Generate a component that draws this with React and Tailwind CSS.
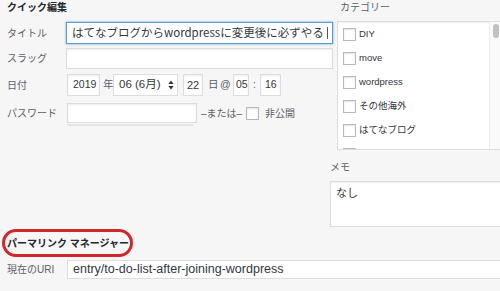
import React from "react";

const F = { fontFamily: '"Liberation Sans", "Noto Sans CJK JP", sans-serif' };

function Box({ className = "", children }) {
  return (
    <div
      className={
        "h-[22px] bg-white border border-[#dddddd] shadow-[inset_0_1px_2px_rgba(0,0,0,0.07)] flex items-center text-[#32373c] " +
        className
      }
    >
      {children}
    </div>
  );
}

function Check({ className = "" }) {
  return (
    <div
      className={
        "w-[13px] h-[13px] shrink-0 bg-white border border-[#b4b9be] shadow-[inset_0_1px_2px_rgba(0,0,0,0.1)] " +
        className
      }
    />
  );
}

const cats = ["DIY", "move", "wordpress", "その他海外", "はてなブログ"];

export default function App() {
  return (
    <div
      className="w-[500px] h-[291px] bg-[#f6f6f6] overflow-hidden text-[#5a6169]"
      style={F}
    >
      <div className="flex">
        {/* left column */}
        <div className="w-[333px] shrink-0 pl-[7px]">
          <div className="h-[15px] leading-[15px] text-[10px] font-bold text-[#23282d]">
            クイック編集
          </div>
          <div className="mt-[7px] flex items-center h-[22px]">
            <div className="w-[59px] shrink-0 text-[10px]">タイトル</div>
            <div
              className="flex-1 h-[22px] bg-white border border-[#5b9dd9] shadow-[0_0_2px_rgba(30,140,190,0.8)] overflow-hidden whitespace-nowrap pl-[5px] flex items-center text-[11.5px] text-[#32373c]"
              style={{ fontFamily: '"Noto Sans CJK JP", sans-serif' }}
            >
              <span className="block overflow-hidden w-[254px]">
                はてなブログからwordpressに変更後に必ずやる
              </span>
              <span className="w-[1px] h-[12px] bg-[#555] ml-[1px]" />
            </div>
          </div>
          <div className="mt-[4px] flex items-center h-[21px]">
            <div className="w-[59px] shrink-0 text-[10px]">スラッグ</div>
            <div className="flex-1 h-[21px] bg-white border border-[#dddddd] shadow-[inset_0_1px_2px_rgba(0,0,0,0.07)]" />
          </div>
          <div className="mt-[5px] flex items-center h-[22px] text-[10.5px]">
            <div className="w-[60px] shrink-0 text-[10px]">日付</div>
            <Box className="w-[33px] pl-[5px]">2019</Box>
            <div className="ml-[3px] w-[10px]">年</div>
            <div className="w-[65px] h-[22px] bg-white border border-[#dddddd] flex items-center pl-[5px] pr-[3px] text-[#32373c] text-[11.5px]">
              <span className="flex-1">06 (6月)</span>
              <svg width="6" height="10" viewBox="0 0 6 10">
                <path d="M3 0.5 L5.6 4 L0.4 4 Z" fill="#333" />
                <path d="M3 9.5 L5.6 6 L0.4 6 Z" fill="#333" />
              </svg>
            </div>
            <Box className="ml-[5px] w-[20px] pl-[3px] text-[11px]">22</Box>
            <div className="ml-[5px] w-[12px]">日</div>
            <div className="w-[11px]">@</div>
            <Box className="ml-[2px] w-[16px] pl-[2px]">05</Box>
            <div className="w-[11px] text-center">:</div>
            <Box className="w-[21px] pl-[4px]">16</Box>
          </div>
          <div className="mt-[7px] flex items-center h-[20px] text-[10px]">
            <div className="w-[60px] shrink-0">パスワード</div>
            <div className="w-[130px] h-[20px] bg-white border border-[#dddddd] shadow-[inset_0_1px_2px_rgba(0,0,0,0.07)]" />
            <div className="ml-[4px] w-[42px]">–または–</div>
            <Check className="ml-[3px]" />
            <div className="ml-[6px]">非公開</div>
          </div>
          <div className="mt-[1px] ml-[60px] w-[126px] h-[2px] bg-[#e4e4e4]" />
        </div>

        {/* right column */}
        <div className="flex-1 ml-[-3px]">
          <div className="pl-[10px] h-[15px] leading-[15px] text-[10px]">カテゴリー</div>
          <div className="mt-[6px] ml-[7px] mr-[7px] h-[129px] bg-white border border-[#dddddd] shadow-[inset_0_1px_2px_rgba(0,0,0,0.07)] flex overflow-hidden">
            <div className="flex-1 pl-[5px] pt-[6px] flex flex-col gap-[11px] text-[9.5px] text-[#32373c]">
              {cats.map((c, i) => (
                <div key={i} className="flex items-center h-[13px] shrink-0">
                  <Check />
                  <span className="ml-[3px]">{c}</span>
                </div>
              ))}
              <div className="flex items-center h-[13px] shrink-0">
                <Check />
              </div>
            </div>
            <div className="w-[13px] border-l border-[#ececec] bg-[#fafafa] pt-[2px] flex justify-center">
              <div className="w-[6px] h-[14px] rounded-full bg-[#c1c1c1]" />
            </div>
          </div>
          <div className="mt-[11px] h-[14px] leading-[14px] text-[10px]">メモ</div>
          <div className="mt-[6px] w-[180px] h-[46px] bg-white border border-[#dddddd] shadow-[inset_0_1px_2px_rgba(0,0,0,0.07)] pl-[5px] pt-[3px] text-[11px] text-[#32373c]">
            なし
          </div>
        </div>
      </div>

      <div className="mt-[2px] ml-[2px] w-[131px] h-[28px] border-[3px] border-[#d3262c] rounded-[14px] flex items-center pl-[2px] text-[10px] font-bold text-[#23282d] whitespace-nowrap">
        パーマリンク マネージャー
      </div>
      <div className="mt-[3px] flex items-center h-[19px]">
        <div className="pl-[7px] w-[67px] shrink-0 text-[10px]">現在のURI</div>
        <div className="flex-1 mr-[-3px] h-[19px] bg-white border border-[#dddddd] pl-[5px] flex items-center text-[12.5px] text-[#32373c] whitespace-nowrap">
          entry/to-do-list-after-joining-wordpress
        </div>
      </div>
    </div>
  );
}
